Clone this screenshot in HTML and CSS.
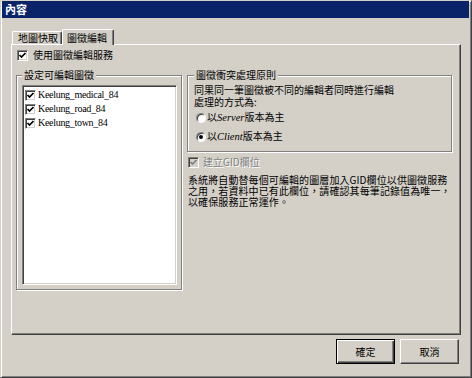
FILE: index.html
```html
<!DOCTYPE html>
<html lang="zh-Hant">
<head>
<meta charset="utf-8">
<title>內容</title>
<link rel="stylesheet" href="styles.css">
</head>
<body>
<div class="window">
  <div class="titlebar">內容</div>
  <div class="tabs">
    <div class="tab">地圖快取</div>
    <div class="tab active">圖徵編輯</div>
  </div>
  <div class="panel">
    <div class="check-row top-check">
      <span class="cb"><svg viewBox="0 0 9 9" width="9" height="9"><path d="M1.5 4 L3.5 6 L7.5 2" /></svg></span>
      <span>使用圖徵編輯服務</span>
    </div>
    <div class="groups">
      <fieldset class="group left-group">
        <legend>設定可編輯圖徵</legend>
        <div class="listbox">
          <div class="item"><span class="cb"><svg viewBox="0 0 9 9" width="9" height="9"><path d="M1.5 4 L3.5 6 L7.5 2" /></svg></span><span class="latin">Keelung_medical_84</span></div>
          <div class="item"><span class="cb"><svg viewBox="0 0 9 9" width="9" height="9"><path d="M1.5 4 L3.5 6 L7.5 2" /></svg></span><span class="latin">Keelung_road_84</span></div>
          <div class="item"><span class="cb"><svg viewBox="0 0 9 9" width="9" height="9"><path d="M1.5 4 L3.5 6 L7.5 2" /></svg></span><span class="latin">Keelung_town_84</span></div>
        </div>
      </fieldset>
      <div class="right-col">
        <fieldset class="group right-group">
          <legend>圖徵衝突處理原則</legend>
          <div class="line">同果同一筆圖徵被不同的編輯者同時進行編輯</div>
          <div class="line">處理的方式為:</div>
          <div class="radio-row"><span class="rb"></span><span>以<span class="latin it">Server</span>版本為主</span></div>
          <div class="radio-row"><span class="rb checked"></span><span>以<span class="latin it">Client</span>版本為主</span></div>
        </fieldset>
        <div class="check-row gid disabled">
          <span class="cb"><svg viewBox="0 0 9 9" width="9" height="9"><path d="M1.5 4 L3.5 6 L7.5 2" /></svg></span>
          <span class="dis-text">建立GID欄位</span>
        </div>
        <p class="desc">系統將自動替每個可編輯的圖層加入GID欄位以供圖徵服務<br>之用，若資料中已有此欄位，請確認其每筆記錄值為唯一，<br>以確保服務正常運作。</p>
      </div>
    </div>
  </div>
  <div class="buttons">
    <button class="btn default">確定</button>
    <button class="btn">取消</button>
  </div>
</div>
</body>
</html>
```
FILE: styles.css
```css
* { box-sizing: border-box; }
html, body { margin: 0; padding: 0; background: #d4d0c8; }
body {
  font-family: "Noto Sans CJK TC", "Noto Sans", sans-serif;
  font-size: 10px;
  line-height: 12px;
  color: #000;
}
.window {
  width: 472px;
  height: 378px;
  border: 1px solid;
  border-color: #d4d0c8 #404040 #404040 #d4d0c8;
  box-shadow: inset 1px 1px 0 #fff, inset -1px -1px 0 #808080;
  padding: 0 2px 2px 1px;
  background: #d4d0c8;
}
.titlebar {
  height: 17px;
  line-height: 16px;
  background: #0a246a;
  color: #fff;
  font-weight: bold;
  font-size: 11px;
  padding-left: 3px;
}
.tabs {
  display: flex;
  align-items: flex-end;
  height: 15px;
  margin-top: 11px;
  margin-left: 10px;
}
.tab {
  width: 50px;
  height: 13px;
  line-height: 12px;
  padding-left: 5px;
  border-top: 1px solid #fff;
  border-left: 1px solid #fff;
  border-right: 1px solid #404040;
  box-shadow: inset -1px 0 0 #808080;
  border-radius: 2px 2px 0 0;
  white-space: nowrap;
}
.tab.active {
  width: 52px;
  height: 16px;
  margin-bottom: -1px;
  padding-left: 4px;
  padding-top: 2px;
  background: #d4d0c8;
  position: relative;
  z-index: 1;
}
.panel {
  width: 450px;
  height: 291px;
  margin-left: 9px;
  border: 1px solid;
  border-color: #fff #404040 #404040 #fff;
  box-shadow: inset -1px -1px 0 #808080;
  padding: 4px 0 0 4px;
}
.check-row {
  display: flex;
  align-items: center;
  height: 12px;
  white-space: nowrap;
}
.top-check .cb { margin-left: 1px; margin-right: 5px; }
.cb {
  display: inline-block;
  flex: none;
  width: 11px;
  height: 11px;
  border: 1px solid;
  border-color: #808080 #fff #fff #808080;
  box-shadow: inset 1px 1px 0 #404040, inset -1px -1px 0 #d4d0c8;
  background: #fff;
}
.cb svg { display: block; }
.cb path { fill: none; stroke: #000; stroke-width: 1.7; }
.groups {
  display: flex;
  align-items: flex-start;
  margin-top: 8px;
}
.group {
  margin: 0;
  min-width: 0;
  border: 1px solid #808080;
  box-shadow: inset 1px 1px 0 #fff, 1px 1px 0 #fff;
}
.group legend {
  padding: 0 2px;
  background: #d4d0c8;
  line-height: 12px;
  white-space: nowrap;
}
.left-group {
  width: 166px;
  padding: 4px 4px 4px 5px;
}
.listbox {
  width: 155px;
  height: 200px;
  border: 1px solid;
  border-color: #808080 #fff #fff #808080;
  box-shadow: inset 1px 1px 0 #404040, inset -1px -1px 0 #d4d0c8;
  background: #fff;
  padding: 2px 0 0 2px;
}
.item {
  display: flex;
  align-items: center;
  height: 14px;
  white-space: nowrap;
}
.item .cb { margin-right: 2px; }
.latin {
  font-family: "Liberation Serif", "Times New Roman", serif;
  font-size: 10.5px;
}
.item .latin {
  font-size: 10px;
  letter-spacing: -0.3px;
}
.it { font-style: italic; }
.right-col {
  margin-left: 5px;
  width: 265px;
}
.right-group {
  width: 265px;
  padding: 3px 4px 5px 6px;
}
.line { height: 12px; white-space: nowrap; }
.radio-row {
  display: flex;
  align-items: center;
  height: 19px;
  white-space: nowrap;
}
.rb {
  position: relative;
  display: inline-block;
  flex: none;
  width: 10px;
  height: 10px;
  margin-left: 2px;
  margin-right: 1px;
  border-radius: 50%;
  border: 1px solid;
  border-color: #808080 #fff #fff #808080;
  box-shadow: inset 1px 1px 0 #404040;
  background: #fff;
}
.rb.checked::after {
  content: "";
  position: absolute;
  left: 2px;
  top: 2px;
  width: 4px;
  height: 4px;
  border-radius: 50%;
  background: #000;
}
.gid { margin-top: 4px; }
.gid .cb { margin-left: 1px; margin-right: 4px; background: #d4d0c8; }
.gid .cb path { stroke: #808080; }
.dis-text { color: #808080; text-shadow: 1px 1px 0 #fff; }
.desc {
  margin: 6px 0 0 1px;
  line-height: 11px;
  white-space: nowrap;
  letter-spacing: 0.1px;
}
.buttons {
  display: flex;
  justify-content: flex-end;
  gap: 5px;
  margin-top: 4px;
  padding-right: 10px;
}
.btn {
  width: 59px;
  height: 25px;
  margin: 0;
  padding: 0;
  font: inherit;
  color: #000;
  background: #d4d0c8;
  border: 1px solid;
  border-color: #fff #404040 #404040 #fff;
  box-shadow: inset -1px -1px 0 #808080;
}
.btn.default {
  border: 1px solid #000;
  box-shadow: inset 1px 1px 0 #fff, inset -1px -1px 0 #404040, inset -2px -2px 0 #808080;
}
```
